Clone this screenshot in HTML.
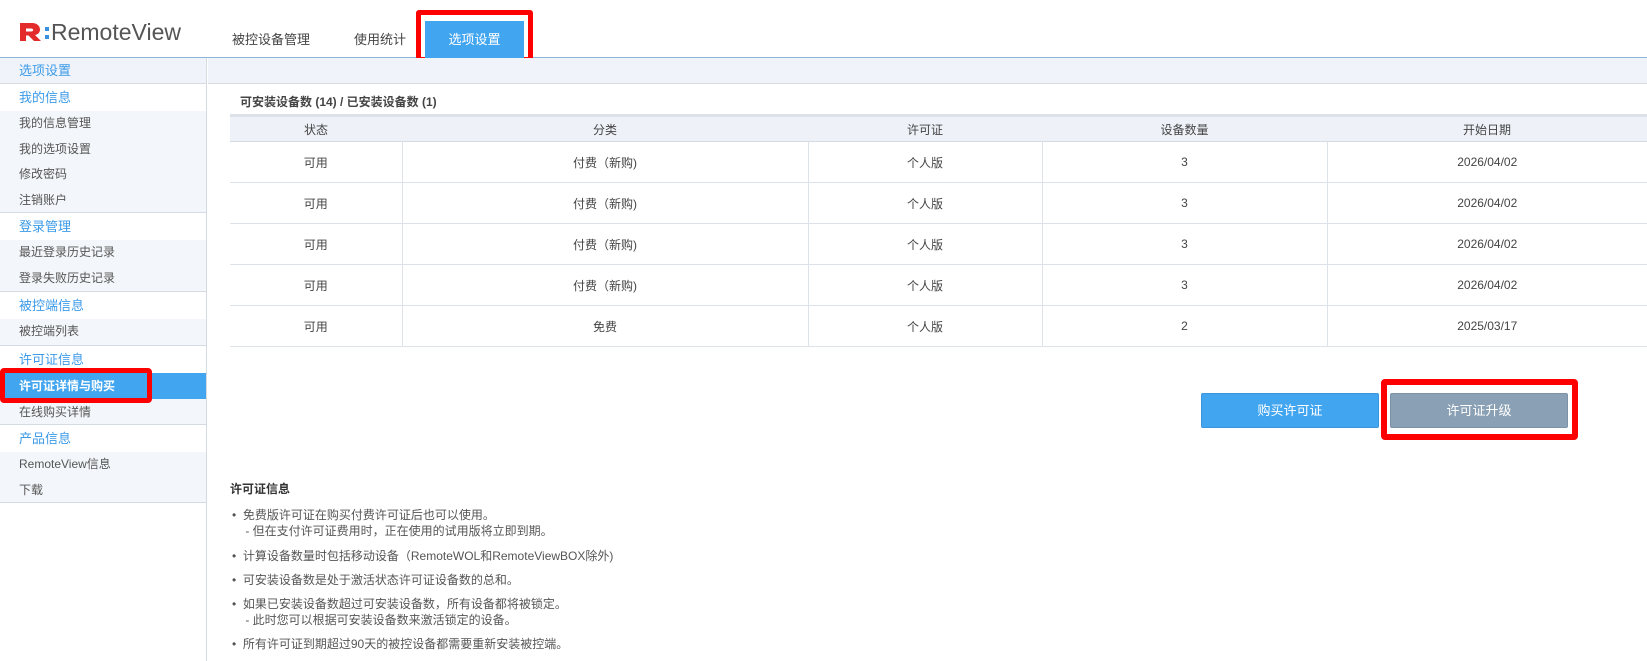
<!DOCTYPE html>
<html><head><meta charset="utf-8"><style>
*{margin:0;padding:0;box-sizing:border-box}
body{width:1647px;height:661px;overflow:hidden;background:#fff;font-family:"Liberation Sans","Noto Sans CJK SC",sans-serif;color:#444;position:relative;font-size:12px}
.a{position:absolute}
.hdr{left:0;top:0;width:1647px;height:58px;border-bottom:1px solid #8fb4d6}
.tab{top:29px;font-size:13px;color:#444}
.side{left:0;top:58px;width:207px;height:603px;border-right:1px solid #d5dbe3}
.row{position:absolute;left:0;width:206px;padding-left:19px;font-size:12px}
.sh{color:#3c9ae8;background:#fff;border-bottom:1px solid #d5dbe3;border-top:1px solid #d5dbe3;font-size:13px}
.it{color:#555;background:#f3f6fa}
table{border-collapse:collapse;font-size:12px;color:#444}
td,th{text-align:center;font-weight:normal}
th{height:26px;background:#eef2f8;border-top:3px solid #dde2ea;border-bottom:1px solid #d5dbe3}
td{height:41px;border-bottom:1px solid #dde2ea;border-left:1px solid #dde2ea}
td:first-child{border-left:none}
.li{left:232px;font-size:12px;color:#555;line-height:16px}
</style></head><body>
<div class="a hdr"></div>
<div class="a" style="left:19px;top:19px;height:26px;display:flex;align-items:center">
<svg width="24" height="22" viewBox="0 0 24 22"><path d="M1 2h12c5 0 8 3 8 6.5 0 3-2 5-5 5.5l6 6h-7l-5.5-5.5H7v5.5H1z M7 7.5v3h5c1.5 0 2.2-.7 2.2-1.5S13.5 7.5 12 7.5z" fill="#e32b2b"/></svg>
<svg width="8" height="22" viewBox="0 0 8 22"><rect x="2" y="6" width="4" height="4" fill="#3a8fe0"/><rect x="2" y="14" width="4" height="4" fill="#3a8fe0"/></svg>
<span style="font-size:23px;color:#555">RemoteView</span></div>
<div class="a tab" style="left:232px">被控设备管理</div>
<div class="a tab" style="left:354px">使用统计</div>
<div class="a" style="left:416px;top:10px;width:117px;height:52px;border:5px solid #f00;border-radius:3px"></div>
<div class="a" style="left:425px;top:21px;width:99px;height:37px;background:#42a5f0;color:#fff;font-size:13px;text-align:center;line-height:37px">选项设置</div>
<div class="a side"></div>
<div class="row" style="top:58px;height:26px;line-height:26px;color:#3c9ae8;font-size:13px;background:#f0f4fa">选项设置</div>
<div class="row sh" style="top:83px;height:29px;line-height:27px">我的信息</div>
<div class="row it" style="top:111px;height:102px;line-height:25.5px">我的信息管理<br>我的选项设置<br>修改密码<br>注销账户</div>
<div class="row sh" style="top:212px;height:29px;line-height:27px">登录管理</div>
<div class="row it" style="top:240px;height:52px;line-height:25.5px">最近登录历史记录<br>登录失败历史记录</div>
<div class="row sh" style="top:291px;height:29px;line-height:27px">被控端信息</div>
<div class="row it" style="top:319px;height:27px;line-height:25px">被控端列表</div>
<div class="row sh" style="top:345px;height:29px;line-height:27px">许可证信息</div>
<div class="row" style="top:373px;height:26px;line-height:26px;background:#42a5f0;color:#fff;font-weight:bold">许可证详情与购买</div>
<div class="row it" style="top:399px;height:26px;line-height:26px">在线购买详情</div>
<div class="row sh" style="top:424px;height:29px;line-height:27px">产品信息</div>
<div class="row it" style="top:452px;height:51px;line-height:25.5px;border-bottom:1px solid #d5dbe3">RemoteView信息<br>下载</div>
<div class="a" style="left:0;top:368px;width:152px;height:35px;border:5px solid #f00;border-radius:4px"></div>
<div class="a" style="left:208px;top:58px;width:1439px;height:26px;background:#f0f4fa;border-bottom:1px solid #d5dbe3"></div>
<div class="a" style="left:240px;top:93px;font-size:12px;font-weight:bold;color:#444">可安装设备数 (14) / 已安装设备数 (1)</div>
<table class="a" style="left:230px;top:114px;width:1417px">
<tr><th style="width:172px">状态</th><th style="width:406px">分类</th><th style="width:234px">许可证</th><th style="width:285px">设备数量</th><th>开始日期</th></tr>
<tr><td>可用</td><td>付费（新购)</td><td>个人版</td><td>3</td><td>2026/04/02</td></tr>
<tr><td>可用</td><td>付费（新购)</td><td>个人版</td><td>3</td><td>2026/04/02</td></tr>
<tr><td>可用</td><td>付费（新购)</td><td>个人版</td><td>3</td><td>2026/04/02</td></tr>
<tr><td>可用</td><td>付费（新购)</td><td>个人版</td><td>3</td><td>2026/04/02</td></tr>
<tr><td>可用</td><td>免费</td><td>个人版</td><td>2</td><td>2025/03/17</td></tr>
</table>
<div class="a" style="left:1201px;top:393px;width:178px;height:35px;background:#42a5f0;border:1px solid #3a95dc;border-radius:2px;color:#fff;font-size:13px;text-align:center;line-height:33px">购买许可证</div>
<div class="a" style="left:1381px;top:379px;width:197px;height:61px;border:6px solid #f00;border-radius:4px"></div>
<div class="a" style="left:1390px;top:393px;width:178px;height:35px;background:#8aa0b4;border:1px solid #7b92a8;border-radius:2px;color:#fff;font-size:13px;text-align:center;line-height:33px">许可证升级</div>
<div class="a" style="left:230px;top:480px;font-size:12px;font-weight:bold;color:#333">许可证信息</div>
<div class="a li" style="top:507px">•&nbsp; 免费版许可证在购买付费许可证后也可以使用。<br>&nbsp;&nbsp;&nbsp;&nbsp;- 但在支付许可证费用时，正在使用的试用版将立即到期。</div>
<div class="a li" style="top:548px">•&nbsp; 计算设备数量时包括移动设备（RemoteWOL和RemoteViewBOX除外)</div>
<div class="a li" style="top:572px">•&nbsp; 可安装设备数是处于激活状态许可证设备数的总和。</div>
<div class="a li" style="top:596px">•&nbsp; 如果已安装设备数超过可安装设备数，所有设备都将被锁定。<br>&nbsp;&nbsp;&nbsp;&nbsp;- 此时您可以根据可安装设备数来激活锁定的设备。</div>
<div class="a li" style="top:636px">•&nbsp; 所有许可证到期超过90天的被控设备都需要重新安装被控端。</div>
</body></html>
